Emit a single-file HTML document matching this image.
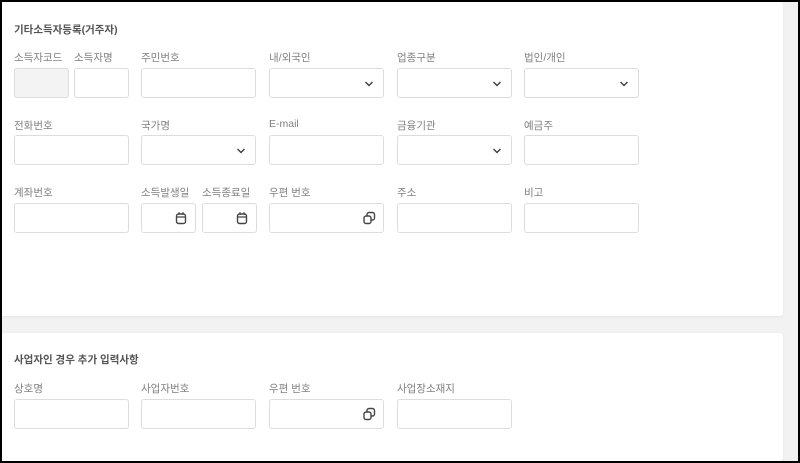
<!DOCTYPE html>
<html><head><meta charset="utf-8"><style>
body{margin:0;width:800px;height:463px;background:#000;font-family:"Liberation Sans","Noto Sans CJK KR",sans-serif;overflow:hidden}
.frame{position:absolute;left:2px;top:2px;width:796px;height:459px;background:#f2f2f2}
.card{position:absolute;left:0;background:#fff;width:781px;border-radius:0 3px 3px 0;box-shadow:0 1px 3px rgba(0,0,0,.06)}
.t{position:absolute;font-size:10.5px;color:#555;font-weight:bold}
.l{position:absolute;font-size:10.5px;color:#808080}
.i{position:absolute;height:28px;border:1px solid #dcdcdc;border-radius:3px;background:#fff;box-sizing:content-box}
.i svg{position:absolute;right:7px;top:7px}
</style></head><body><div class="frame">
<div class="card" style="top:0;height:314px">
<div class="t" style="left:12px;top:20px">기타소득자등록(거주자)</div>
<div class="l" style="left:12px;top:48px">소득자코드</div>
<div class="l" style="left:72px;top:48px">소득자명</div>
<div class="l" style="left:139px;top:48px">주민번호</div>
<div class="l" style="left:267px;top:48px">내/외국인</div>
<div class="l" style="left:395px;top:48px">업종구분</div>
<div class="l" style="left:522px;top:48px">법인/개인</div>
<div class="i" style="left:12px;top:66px;width:53px;background:#f3f3f3"></div>
<div class="i" style="left:72px;top:66px;width:53px"></div>
<div class="i" style="left:139px;top:66px;width:113px"></div>
<div class="i" style="left:267px;top:66px;width:113px"><svg width="14" height="14"><path d="M3.5 6l3.5 3.5 3.5-3.5" stroke="#444" stroke-width="1.5" fill="none"/></svg></div>
<div class="i" style="left:395px;top:66px;width:113px"><svg width="14" height="14"><path d="M3.5 6l3.5 3.5 3.5-3.5" stroke="#444" stroke-width="1.5" fill="none"/></svg></div>
<div class="i" style="left:522px;top:66px;width:113px"><svg width="14" height="14"><path d="M3.5 6l3.5 3.5 3.5-3.5" stroke="#444" stroke-width="1.5" fill="none"/></svg></div>
<div class="l" style="left:12px;top:116px">전화번호</div>
<div class="l" style="left:139px;top:116px">국가명</div>
<div class="l" style="left:267px;top:116px">E-mail</div>
<div class="l" style="left:395px;top:116px">금융기관</div>
<div class="l" style="left:522px;top:116px">예금주</div>
<div class="i" style="left:12px;top:133px;width:113px"></div>
<div class="i" style="left:139px;top:133px;width:113px"><svg width="14" height="14"><path d="M3.5 6l3.5 3.5 3.5-3.5" stroke="#444" stroke-width="1.5" fill="none"/></svg></div>
<div class="i" style="left:267px;top:133px;width:113px"></div>
<div class="i" style="left:395px;top:133px;width:113px"><svg width="14" height="14"><path d="M3.5 6l3.5 3.5 3.5-3.5" stroke="#444" stroke-width="1.5" fill="none"/></svg></div>
<div class="i" style="left:522px;top:133px;width:113px"></div>
<div class="l" style="left:12px;top:183px">계좌번호</div>
<div class="l" style="left:139px;top:183px">소득발생일</div>
<div class="l" style="left:200px;top:183px">소득종료일</div>
<div class="l" style="left:267px;top:183px">우편 번호</div>
<div class="l" style="left:395px;top:183px">주소</div>
<div class="l" style="left:522px;top:183px">비고</div>
<div class="i" style="left:12px;top:201px;width:113px"></div>
<div class="i" style="left:139px;top:201px;width:53px"><svg width="14" height="14"><rect x="2.5" y="3" width="9" height="9.5" rx="2" stroke="#444" stroke-width="1.4" fill="none"/><path d="M2.5 6h9M5 1.2v2.5M9 1.2v2.5" stroke="#444" stroke-width="1.3"/></svg></div>
<div class="i" style="left:200px;top:201px;width:53px"><svg width="14" height="14"><rect x="2.5" y="3" width="9" height="9.5" rx="2" stroke="#444" stroke-width="1.4" fill="none"/><path d="M2.5 6h9M5 1.2v2.5M9 1.2v2.5" stroke="#444" stroke-width="1.3"/></svg></div>
<div class="i" style="left:267px;top:201px;width:113px"><svg width="14" height="14"><rect x="2" y="5" width="7" height="7.5" rx="2" stroke="#444" stroke-width="1.4" fill="none"/><path d="M5 5V3.5A2 2 0 0 1 7 1.5h3.5a2 2 0 0 1 2 2V7a2 2 0 0 1-2 2H9" stroke="#444" stroke-width="1.4" fill="none"/></svg></div>
<div class="i" style="left:395px;top:201px;width:113px"></div>
<div class="i" style="left:522px;top:201px;width:113px"></div>
</div>
<div class="card" style="top:331px;height:128px">
<div class="t" style="left:12px;top:19px">사업자인 경우 추가 입력사항</div>
<div class="l" style="left:12px;top:48px">상호명</div>
<div class="l" style="left:139px;top:48px">사업자번호</div>
<div class="l" style="left:267px;top:48px">우편 번호</div>
<div class="l" style="left:395px;top:48px">사업장소재지</div>
<div class="i" style="left:12px;top:66px;width:113px"></div>
<div class="i" style="left:139px;top:66px;width:113px"></div>
<div class="i" style="left:267px;top:66px;width:113px"><svg width="14" height="14"><rect x="2" y="5" width="7" height="7.5" rx="2" stroke="#444" stroke-width="1.4" fill="none"/><path d="M5 5V3.5A2 2 0 0 1 7 1.5h3.5a2 2 0 0 1 2 2V7a2 2 0 0 1-2 2H9" stroke="#444" stroke-width="1.4" fill="none"/></svg></div>
<div class="i" style="left:395px;top:66px;width:113px"></div>
</div>
</div></body></html>
